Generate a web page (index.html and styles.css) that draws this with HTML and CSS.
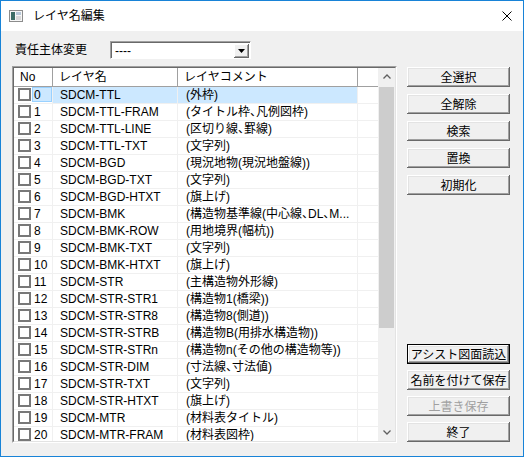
FILE: index.html
```html
<!DOCTYPE html>
<html lang="ja">
<head>
    <meta charset="UTF-8">
    <title>レイヤ名編集</title>
    <link rel="stylesheet" href="styles.css">
</head>
<body>
    <div class="window">
        <!-- タイトルバー -->
        <div class="titlebar">
            <svg class="app-icon" width="14" height="12" viewBox="0 0 14 12">
                <rect x="0.5" y="0.5" width="13" height="11" fill="#f6f6f6" stroke="#8c8c8c"/>
                <rect x="2" y="2" width="4" height="8" fill="#3d6d66"/>
                <rect x="7" y="2" width="5" height="3" fill="#b8c8d8"/>
                <rect x="7" y="6" width="5" height="4" fill="#d9d9d9"/>
            </svg>
            <span class="title">レイヤ名編集</span>
            <svg class="close" width="10" height="10" viewBox="0 0 10 10">
                <path d="M0.5 0.5 L9.5 9.5 M9.5 0.5 L0.5 9.5" stroke="#000" stroke-width="1"/>
            </svg>
        </div>

        <div class="client">
            <div class="owner-row">
                <label class="owner-label">責任主体変更</label>
                <div class="combo">
                    <span class="combo-text">----</span>
                    <span class="combo-btn">
                        <svg width="7" height="4" viewBox="0 0 7 4"><path d="M0 0 H7 L3.5 4 Z" fill="#000"/></svg>
                    </span>
                </div>
            </div>

            <div class="main">
                <div class="listview">
                    <div class="list-inner">
                        <div class="list-body">
                            <div class="list-header">
                                <div class="hcell col-no">No</div>
                                <div class="hcell col-name">レイヤ名</div>
                                <div class="hcell col-comment">レイヤコメント</div>
                                <div class="hcell col-fill"></div>
                            </div>

                            <div class="row selected">
                                <div class="cell col-no"><span class="check"></span><span class="num">0</span></div>
                                <div class="cell col-name">SDCM-TTL</div>
                                <div class="cell col-comment">(外枠)</div>
                                <div class="cell col-fill"></div>
                            </div>
                            <div class="row">
                                <div class="cell col-no"><span class="check"></span><span class="num">1</span></div>
                                <div class="cell col-name">SDCM-TTL-FRAM</div>
                                <div class="cell col-comment">(タイトル枠、凡例図枠)</div>
                                <div class="cell col-fill"></div>
                            </div>
                            <div class="row">
                                <div class="cell col-no"><span class="check"></span><span class="num">2</span></div>
                                <div class="cell col-name">SDCM-TTL-LINE</div>
                                <div class="cell col-comment">(区切り線、罫線)</div>
                                <div class="cell col-fill"></div>
                            </div>
                            <div class="row">
                                <div class="cell col-no"><span class="check"></span><span class="num">3</span></div>
                                <div class="cell col-name">SDCM-TTL-TXT</div>
                                <div class="cell col-comment">(文字列)</div>
                                <div class="cell col-fill"></div>
                            </div>
                            <div class="row">
                                <div class="cell col-no"><span class="check"></span><span class="num">4</span></div>
                                <div class="cell col-name">SDCM-BGD</div>
                                <div class="cell col-comment">(現況地物(現況地盤線))</div>
                                <div class="cell col-fill"></div>
                            </div>
                            <div class="row">
                                <div class="cell col-no"><span class="check"></span><span class="num">5</span></div>
                                <div class="cell col-name">SDCM-BGD-TXT</div>
                                <div class="cell col-comment">(文字列)</div>
                                <div class="cell col-fill"></div>
                            </div>
                            <div class="row">
                                <div class="cell col-no"><span class="check"></span><span class="num">6</span></div>
                                <div class="cell col-name">SDCM-BGD-HTXT</div>
                                <div class="cell col-comment">(旗上げ)</div>
                                <div class="cell col-fill"></div>
                            </div>
                            <div class="row">
                                <div class="cell col-no"><span class="check"></span><span class="num">7</span></div>
                                <div class="cell col-name">SDCM-BMK</div>
                                <div class="cell col-comment">(構造物基準線(中心線、DL、M...</div>
                                <div class="cell col-fill"></div>
                            </div>
                            <div class="row">
                                <div class="cell col-no"><span class="check"></span><span class="num">8</span></div>
                                <div class="cell col-name">SDCM-BMK-ROW</div>
                                <div class="cell col-comment">(用地境界(幅杭))</div>
                                <div class="cell col-fill"></div>
                            </div>
                            <div class="row">
                                <div class="cell col-no"><span class="check"></span><span class="num">9</span></div>
                                <div class="cell col-name">SDCM-BMK-TXT</div>
                                <div class="cell col-comment">(文字列)</div>
                                <div class="cell col-fill"></div>
                            </div>
                            <div class="row">
                                <div class="cell col-no"><span class="check"></span><span class="num">10</span></div>
                                <div class="cell col-name">SDCM-BMK-HTXT</div>
                                <div class="cell col-comment">(旗上げ)</div>
                                <div class="cell col-fill"></div>
                            </div>
                            <div class="row">
                                <div class="cell col-no"><span class="check"></span><span class="num">11</span></div>
                                <div class="cell col-name">SDCM-STR</div>
                                <div class="cell col-comment">(主構造物外形線)</div>
                                <div class="cell col-fill"></div>
                            </div>
                            <div class="row">
                                <div class="cell col-no"><span class="check"></span><span class="num">12</span></div>
                                <div class="cell col-name">SDCM-STR-STR1</div>
                                <div class="cell col-comment">(構造物1(橋梁))</div>
                                <div class="cell col-fill"></div>
                            </div>
                            <div class="row">
                                <div class="cell col-no"><span class="check"></span><span class="num">13</span></div>
                                <div class="cell col-name">SDCM-STR-STR8</div>
                                <div class="cell col-comment">(構造物8(側道))</div>
                                <div class="cell col-fill"></div>
                            </div>
                            <div class="row">
                                <div class="cell col-no"><span class="check"></span><span class="num">14</span></div>
                                <div class="cell col-name">SDCM-STR-STRB</div>
                                <div class="cell col-comment">(構造物B(用排水構造物))</div>
                                <div class="cell col-fill"></div>
                            </div>
                            <div class="row">
                                <div class="cell col-no"><span class="check"></span><span class="num">15</span></div>
                                <div class="cell col-name">SDCM-STR-STRn</div>
                                <div class="cell col-comment">(構造物n(その他の構造物等))</div>
                                <div class="cell col-fill"></div>
                            </div>
                            <div class="row">
                                <div class="cell col-no"><span class="check"></span><span class="num">16</span></div>
                                <div class="cell col-name">SDCM-STR-DIM</div>
                                <div class="cell col-comment">(寸法線、寸法値)</div>
                                <div class="cell col-fill"></div>
                            </div>
                            <div class="row">
                                <div class="cell col-no"><span class="check"></span><span class="num">17</span></div>
                                <div class="cell col-name">SDCM-STR-TXT</div>
                                <div class="cell col-comment">(文字列)</div>
                                <div class="cell col-fill"></div>
                            </div>
                            <div class="row">
                                <div class="cell col-no"><span class="check"></span><span class="num">18</span></div>
                                <div class="cell col-name">SDCM-STR-HTXT</div>
                                <div class="cell col-comment">(旗上げ)</div>
                                <div class="cell col-fill"></div>
                            </div>
                            <div class="row">
                                <div class="cell col-no"><span class="check"></span><span class="num">19</span></div>
                                <div class="cell col-name">SDCM-MTR</div>
                                <div class="cell col-comment">(材料表タイトル)</div>
                                <div class="cell col-fill"></div>
                            </div>
                            <div class="row">
                                <div class="cell col-no"><span class="check"></span><span class="num">20</span></div>
                                <div class="cell col-name">SDCM-MTR-FRAM</div>
                                <div class="cell col-comment">(材料表図枠)</div>
                                <div class="cell col-fill"></div>
                            </div>
                        </div>

                        <!-- 縦スクロールバー -->
                        <div class="vscroll">
                            <div class="sb-btn">
                                <svg width="8" height="5" viewBox="0 0 8 5"><path d="M0.5 4.5 L4 1 L7.5 4.5" fill="none" stroke="#606060" stroke-width="1.3"/></svg>
                            </div>
                            <div class="sb-track">
                                <div class="sb-thumb"></div>
                            </div>
                            <div class="sb-btn">
                                <svg width="8" height="5" viewBox="0 0 8 5"><path d="M0.5 0.5 L4 4 L7.5 0.5" fill="none" stroke="#606060" stroke-width="1.3"/></svg>
                            </div>
                        </div>
                    </div>
                </div>

                <div class="buttons">
                    <div class="btn-group">
                        <button class="btn">全選択</button>
                        <button class="btn">全解除</button>
                        <button class="btn">検索</button>
                        <button class="btn">置換</button>
                        <button class="btn">初期化</button>
                    </div>
                    <div class="btn-group bottom">
                        <button class="btn default">アシスト図面読込</button>
                        <button class="btn">名前を付けて保存</button>
                        <button class="btn" disabled>上書き保存</button>
                        <button class="btn">終了</button>
                    </div>
                </div>
            </div>
        </div>
    </div>
</body>
</html>
```

FILE: styles.css
```css
/* リセット */
* {
    margin: 0;
    padding: 0;
    box-sizing: border-box;
}

body {
    font-family: "Liberation Sans", "Noto Sans CJK JP", sans-serif;
    font-size: 12px;
    color: #000;
    background: #f0f0f0;
}

/* ウィンドウ */
.window {
    width: 524px;
    height: 457px;
    border: 1px solid #1883d7;
    background: #f0f0f0;
    display: flex;
    flex-direction: column;
}

.titlebar {
    height: 30px;
    background: #fff;
    display: flex;
    align-items: center;
    padding-left: 8px;
    flex-shrink: 0;
}

.title {
    margin-left: 10px;
    font-size: 12px;
    line-height: 16px;
}

.close {
    margin-left: auto;
    margin-right: 11px;
}

.client {
    flex: 1;
    padding: 10px 0 0 11px;
}

/* 責任主体変更 */
.owner-row {
    display: flex;
    align-items: center;
    height: 18px;
}

.owner-label {
    width: 98px;
    padding-left: 3px;
    line-height: 16px;
}

.combo {
    width: 141px;
    height: 18px;
    background: #fff;
    border-top: 1px solid #a0a0a0;
    border-left: 1px solid #a0a0a0;
    border-right: 1px solid #fff;
    border-bottom: 1px solid #fff;
    box-shadow: inset 1px 1px 0 #696969;
    display: flex;
    align-items: center;
    padding: 1px 1px 0 4px;
}

.combo-text {
    flex: 1;
    line-height: 14px;
}

.combo-btn {
    width: 15px;
    height: 14px;
    background: #f0f0f0;
    box-shadow: inset -1px -1px 0 #696969, inset 1px 1px 0 #fff, inset -2px -2px 0 #a0a0a0;
    display: flex;
    align-items: center;
    justify-content: center;
}

/* メイン */
.main {
    display: flex;
    margin-top: 7px;
    height: 377px;
}

/* リストビュー */
.listview {
    width: 385px;
    height: 377px;
    border-top: 1px solid #a0a0a0;
    border-left: 1px solid #a0a0a0;
    border-right: 1px solid #fff;
    border-bottom: 1px solid #fff;
}

.list-inner {
    height: 100%;
    background: #fff;
    border-top: 1px solid #696969;
    border-left: 1px solid #696969;
    border-right: 1px solid #e3e3e3;
    border-bottom: 1px solid #e3e3e3;
    display: flex;
    overflow: hidden;
}

.list-body {
    flex: 1;
    overflow: hidden;
}

.list-header {
    display: flex;
    height: 19px;
    border-bottom: 1px solid #a0a0a0;
    background: #fff;
}

.hcell {
    line-height: 18px;
    padding-left: 6px;
    border-right: 1px solid #a0a0a0;
    box-shadow: 1px 0 0 #fff;
}

.hcell.col-fill {
    border-right: none;
    box-shadow: none;
}

.col-no {
    width: 39px;
    flex-shrink: 0;
}

.col-name {
    width: 125px;
    flex-shrink: 0;
}

.col-comment {
    width: 180px;
    flex-shrink: 0;
}

.col-fill {
    flex: 1;
}

.row {
    display: flex;
    height: 17px;
}

.cell {
    height: 17px;
    line-height: 16px;
    padding-left: 7px;
    border-bottom: 1px solid #f0f0f0;
    border-right: 1px solid #f0f0f0;
    white-space: nowrap;
    overflow: hidden;
}

.cell.col-fill {
    border-right: none;
}

/* 句読点を半角幅で詰める */
.cell.col-comment {
    padding-left: 8px;
    font-feature-settings: "halt";
}

.cell.col-no {
    display: flex;
    align-items: center;
    padding-left: 4px;
    padding-bottom: 1px;
}

.check {
    width: 13px;
    height: 13px;
    border: 2px solid #787878;
    background: #fff;
    flex-shrink: 0;
}

.num {
    margin-left: 1px;
    padding-left: 1px;
    line-height: 14px;
    height: 15px;
    flex: 1;
    border: 1px solid transparent;
}

.row.selected .col-name,
.row.selected .col-comment {
    background: #cce8ff;
}

.row.selected .num {
    background: #cce8ff;
    border-color: #99d1ff;
}

/* スクロールバー */
.vscroll {
    width: 17px;
    background: #f0f0f0;
    display: flex;
    flex-direction: column;
    flex-shrink: 0;
}

.sb-btn {
    height: 17px;
    display: flex;
    align-items: center;
    justify-content: center;
}

.sb-track {
    flex: 1;
    padding: 2px 1px 0 1px;
}

.sb-thumb {
    height: 241px;
    background: #cdcdcd;
}

/* ボタン */
.buttons {
    margin-left: 10px;
    width: 103px;
    display: flex;
    flex-direction: column;
    justify-content: space-between;
    padding: 1px 0 1px 0;
}

.btn-group {
    display: flex;
    flex-direction: column;
    gap: 7px;
}

.btn-group.bottom {
    gap: 6px;
}

.btn {
    height: 20px;
    width: 103px;
    font-family: "Noto Sans CJK JP", sans-serif;
    font-size: 12px;
    line-height: 16px;
    color: #000;
    background: #f0f0f0;
    border: none;
    box-shadow: inset -1px -1px 0 #696969, inset 1px 1px 0 #fff, inset -2px -2px 0 #a0a0a0, inset 2px 2px 0 #e3e3e3;
    text-align: center;
}

.btn.default {
    border: 1px solid #000;
}

.btn:disabled {
    color: #a0a0a0;
}
```
